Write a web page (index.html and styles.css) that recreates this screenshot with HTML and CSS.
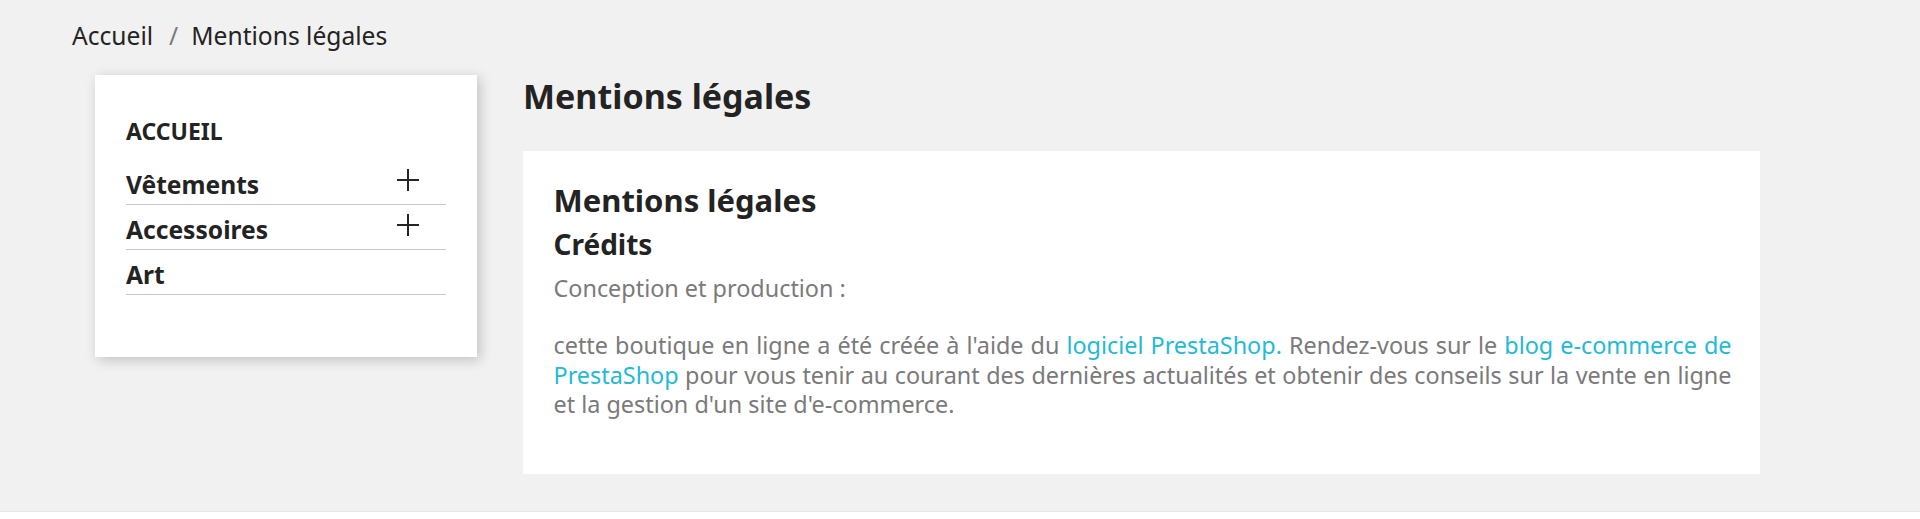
FILE: index.html
```html
<!DOCTYPE html>
<html lang="fr">
<head>
<meta charset="utf-8">
<title>Mentions légales</title>
<link rel="stylesheet" href="styles.css">
</head>
<body>
<div class="wrapper">
  <nav class="breadcrumb">
    <a class="crumb" href="#">Accueil</a><span class="sep">/</span><span class="crumb">Mentions légales</span>
  </nav>
  <div class="row">
    <aside class="sidebar">
      <div class="cat-title">ACCUEIL</div>
      <ul class="cat-list">
        <li class="cat-item"><span class="cat-name">Vêtements</span><svg class="plus" viewBox="0 0 22 22" width="22" height="22"><path d="M11 0V22M0 11H22" stroke="#232323" stroke-width="2" fill="none"/></svg></li>
        <li class="cat-item"><span class="cat-name">Accessoires</span><svg class="plus" viewBox="0 0 22 22" width="22" height="22"><path d="M11 0V22M0 11H22" stroke="#232323" stroke-width="2" fill="none"/></svg></li>
        <li class="cat-item"><span class="cat-name">Art</span></li>
      </ul>
    </aside>
    <main class="content">
      <h1 class="page-title">Mentions légales</h1>
      <section class="card">
        <h2 class="card-title">Mentions légales</h2>
        <h3 class="card-sub">Crédits</h3>
        <p class="text">Conception et production :</p>
        <p class="text text-main">cette boutique en ligne a été créée à l'aide du <a href="#">logiciel PrestaShop.</a> Rendez-vous sur le <a href="#">blog e-commerce de PrestaShop</a> pour vous tenir au courant des dernières actualités et obtenir des conseils sur la vente en ligne et la gestion d'un site d'e-commerce.</p>
      </section>
    </main>
  </div>
</div>
<footer class="footer"></footer>
</body>
</html>
```

FILE: styles.css
```css
* { box-sizing: border-box; }
html, body { margin: 0; padding: 0; }
body {
  background: #ffffff;
  font-family: "Noto Sans", "Open Sans", sans-serif;
  color: #232323;
}
.wrapper {
  background: #f1f1f1;
  height: 512px;
  border-bottom: 1px solid #e6e6e6;
}
.breadcrumb {
  padding: 18px 0 0 72px;
  font-size: 24.6px;
  line-height: 36px;
  height: 54px;
  color: #232323;
}
.crumb { color: #232323; text-decoration: none; }
.sep { color: #7a7a7a; margin: 0 13px 0 16px; }
.row {
  display: flex;
  align-items: flex-start;
  margin-top: 21px;
  padding-left: 95px;
  gap: 46px;
}
.sidebar {
  width: 382px;
  height: 282px;
  background: #fff;
  box-shadow: 3px 3px 12px 0 rgba(0,0,0,0.2);
  padding: 41px 31px 0 31px;
}
.cat-title {
  font-size: 23px;
  font-weight: 700;
  line-height: 31.3px;
  margin-bottom: 13px;
}
.cat-list { list-style: none; margin: 0; padding: 0; }
.cat-item {
  display: flex;
  justify-content: space-between;
  align-items: center;
  height: 45px;
  font-size: 24.6px;
  font-weight: 700;
  border-bottom: 1px solid #c9c9c9;
}
.cat-name { padding-top: 6px; line-height: 38px; }
.plus { margin-right: 27px; margin-top: -4px; }
.content { width: 1237px; }
.page-title {
  margin: 0 0 34px 0;
  font-size: 34px;
  line-height: 42px;
  font-weight: 700;
}
.card {
  background: #fff;
  height: 323px;
  padding: 31px 28.5px 0 30.5px;
}
.card-title {
  margin: 0;
  font-size: 31px;
  line-height: 36px;
  font-weight: 700;
}
.card-sub {
  margin: 10px 0 0 0;
  font-size: 28px;
  line-height: 33.6px;
  font-weight: 700;
}
.text {
  margin: 12.7px 0 0 0;
  font-size: 23.4px;
  line-height: 29.25px;
  color: #7a7a7a;
  text-align: justify;
}
.text-main { margin-top: 27.75px; }
.text a { color: #24b9d7; text-decoration: none; }
.footer { height: 7px; background: #fff; }
```
